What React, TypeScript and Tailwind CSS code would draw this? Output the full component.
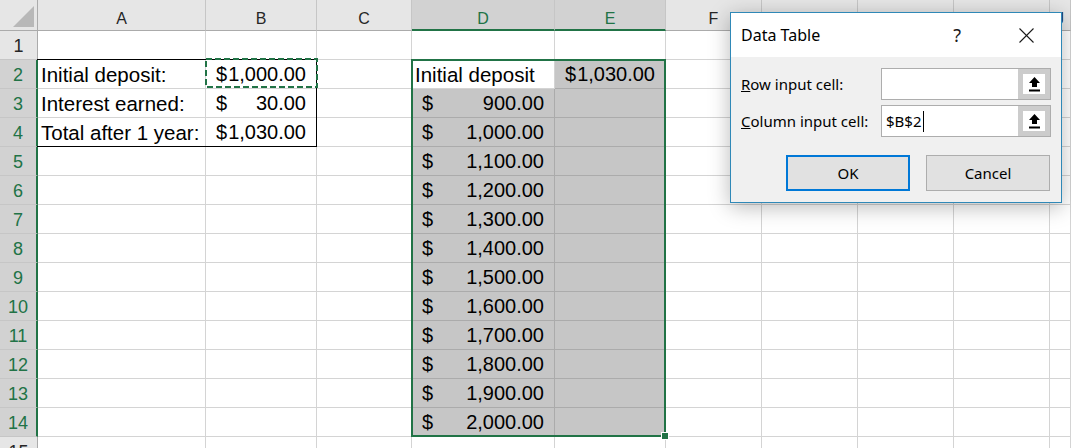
import React from "react";

const COLS = ["A", "B", "C", "D", "E", "F", "G", "H", "I", "J"];
const DVALS = [
  "900.00",
  "1,000.00",
  "1,100.00",
  "1,200.00",
  "1,300.00",
  "1,400.00",
  "1,500.00",
  "1,600.00",
  "1,700.00",
  "1,800.00",
  "1,900.00",
  "2,000.00",
];

function Label({ text }: { text: string }) {
  return (
    <div className="pl-[3px] pt-[1px] leading-[27px] text-[20.5px] whitespace-nowrap text-black">
      {text}
    </div>
  );
}

function Acct({ v }: { v: string }) {
  return (
    <div className="flex justify-between px-[10px] pt-[1px] leading-[27px] text-[20px] whitespace-nowrap text-black">
      <span>$</span>
      <span>{v}</span>
    </div>
  );
}

function content(r: number, c: number) {
  if (c === 1) {
    if (r === 2) return <Label text="Initial deposit:" />;
    if (r === 3) return <Label text="Interest earned:" />;
    if (r === 4) return <Label text="Total after 1 year:" />;
  }
  if (c === 2) {
    if (r === 2) return <Acct v="1,000.00" />;
    if (r === 3) return <Acct v="30.00" />;
    if (r === 4) return <Acct v="1,030.00" />;
  }
  if (c === 4) {
    if (r === 2) return <Label text="Initial deposit" />;
    if (r >= 3 && r <= 14) return <Acct v={DVALS[r - 3]} />;
  }
  if (c === 5 && r === 2) return <Acct v="1,030.00" />;
  return null;
}

function Corner() {
  return (
    <div className="flex items-end justify-end bg-[#e6e6e6] border-r border-b border-[#ababab] pr-[3px] pb-[3px]">
      <svg width="21" height="21" viewBox="0 0 21 21">
        <polygon points="21,0 21,21 0,21" fill="#b8b8b8" />
      </svg>
    </div>
  );
}

function ColHeader({ c }: { c: number }) {
  const sel = c === 4 || c === 5;
  return (
    <div
      className={
        sel
          ? "bg-[#d2d2d2] text-[#217346] border-r border-r-[#c6c6c6] border-b-2 border-b-[#217346] text-center pt-[7px] leading-[23px] text-[16px]"
          : "bg-[#e6e6e6] text-[#262626] border-r border-r-[#c6c6c6] border-b border-b-[#ababab] text-center pt-[7px] leading-[23px] text-[16px]"
      }
    >
      {COLS[c - 1]}
    </div>
  );
}

function RowHeader({ r }: { r: number }) {
  const sel = r >= 2 && r <= 14;
  return (
    <div
      className={
        sel
          ? "bg-[#d2d2d2] text-[#217346] border-b border-b-[#c6c6c6] border-r-2 border-r-[#217346] text-center pt-[3px] leading-[25px] text-[18px]"
          : "bg-[#e6e6e6] text-[#262626] border-b border-b-[#c6c6c6] border-r border-r-[#ababab] text-center pt-[3px] leading-[25px] text-[18px]"
      }
    >
      {r}
    </div>
  );
}

function Cell({ r, c }: { r: number; c: number }) {
  const sel = (c === 4 && r >= 3 && r <= 14) || (c === 5 && r >= 2 && r <= 14);
  return (
    <div
      className={
        sel
          ? "bg-[#c6c6c6] border-r border-b border-[#ababab] overflow-hidden"
          : "bg-white border-r border-b border-[#d4d4d4] overflow-hidden"
      }
    >
      {content(r, c)}
    </div>
  );
}

function UpArrow() {
  return (
    <svg width="11" height="15" viewBox="0 0 11 15">
      <polygon points="5.5,0 11,6 8,6 8,10 3,10 3,6 0,6" fill="#000" />
      <rect x="0" y="12.5" width="11" height="2" fill="#000" />
    </svg>
  );
}

function RefInput({ value }: { value?: string }) {
  return (
    <div className="flex h-[32px] w-[170px] border border-[#adadad] bg-white">
      <div className="flex flex-1 items-center pl-[4px] text-[15px] text-black">
        {value ? (
          <>
            <span>{value}</span>
            <span className="ml-[1px] inline-block h-[21px] w-[1px] bg-black" />
          </>
        ) : null}
      </div>
      <div className="w-[32px] bg-[#cccccc] p-[5px]">
        <div className="flex h-full w-full items-center justify-center bg-white">
          <UpArrow />
        </div>
      </div>
    </div>
  );
}

function Dialog() {
  return (
    <div
      className="absolute left-[730px] top-[12px] w-[332px] h-[191px] border border-[#2f88b7] bg-[#f0f0f0] shadow-[0_4px_20px_rgba(0,0,0,0.28)]"
      style={{ fontFamily: '"Noto Sans", "Open Sans", sans-serif' }}
    >
      <div className="flex h-[44px] items-center bg-white pl-[10px] pr-[27px]">
        <span className="text-[16px] text-black">Data Table</span>
        <span className="ml-auto mr-[58px] text-[18px] text-[#1a1a1a]">?</span>
        <svg width="15" height="15" viewBox="0 0 15 15">
          <line x1="0.5" y1="0.5" x2="14.5" y2="14.5" stroke="#1a1a1a" strokeWidth="1.1" />
          <line x1="14.5" y1="0.5" x2="0.5" y2="14.5" stroke="#1a1a1a" strokeWidth="1.1" />
        </svg>
      </div>
      <div className="pt-[11px] pl-[10px] pr-[10px]">
        <div className="flex h-[32px] items-center justify-between">
          <span className="text-[15px] text-black">
            <span className="underline">R</span>ow input cell:
          </span>
          <RefInput />
        </div>
        <div className="mt-[5px] flex h-[32px] items-center justify-between">
          <span className="text-[15px] text-black">
            <span className="underline">C</span>olumn input cell:
          </span>
          <RefInput value="$B$2" />
        </div>
        <div className="mt-[18px] flex justify-end gap-[16px] pr-[1px]">
          <button className="flex h-[36px] w-[124px] items-center justify-center border-2 border-[#0078d7] bg-[#e1e1e1] text-[15px] text-black">
            OK
          </button>
          <button className="flex h-[36px] w-[124px] items-center justify-center border border-[#adadad] bg-[#e1e1e1] text-[15px] text-black">
            Cancel
          </button>
        </div>
      </div>
    </div>
  );
}

export default function App() {
  const rows = Array.from({ length: 16 }, (_, i) => i);
  const cols = Array.from({ length: 11 }, (_, i) => i);
  return (
    <div
      className="relative h-[448px] w-[1071px] overflow-hidden bg-white"
      style={{ fontFamily: '"Liberation Sans", Arial, sans-serif' }}
    >
      <div className="grid grid-cols-[38px_168px_111px_95px_143px_111px_96px_96px_96px_96px_21px] grid-rows-[31px_repeat(15,29px)]">
        {rows.map((r) =>
          cols.map((c) => {
            const key = `${r}-${c}`;
            if (r === 0 && c === 0) return <Corner key={key} />;
            if (r === 0) return <ColHeader key={key} c={c} />;
            if (c === 0) return <RowHeader key={key} r={r} />;
            return <Cell key={key} r={r} c={c} />;
          })
        )}
      </div>

      {/* black outline A2:B4 */}
      <div className="pointer-events-none absolute left-[37px] top-[59px] h-[88px] w-[280px] border-t border-r border-b border-black" />

      {/* marching ants around B2 */}
      <svg className="pointer-events-none absolute left-[205px] top-[58px]" width="113" height="30" viewBox="0 0 113 30">
        <rect x="1" y="1" width="111" height="28" fill="none" stroke="#217346" strokeWidth="2" strokeDasharray="6 3" />
      </svg>

      {/* selection D2:E14 */}
      <div className="pointer-events-none absolute left-[411px] top-[59px] h-[378px] w-[255px] border-2 border-[#217346]" />
      {/* fill handle */}
      <div className="pointer-events-none absolute left-[661px] top-[432px] h-[8px] w-[8px] border border-white bg-[#217346]" />

      <Dialog />
    </div>
  );
}
